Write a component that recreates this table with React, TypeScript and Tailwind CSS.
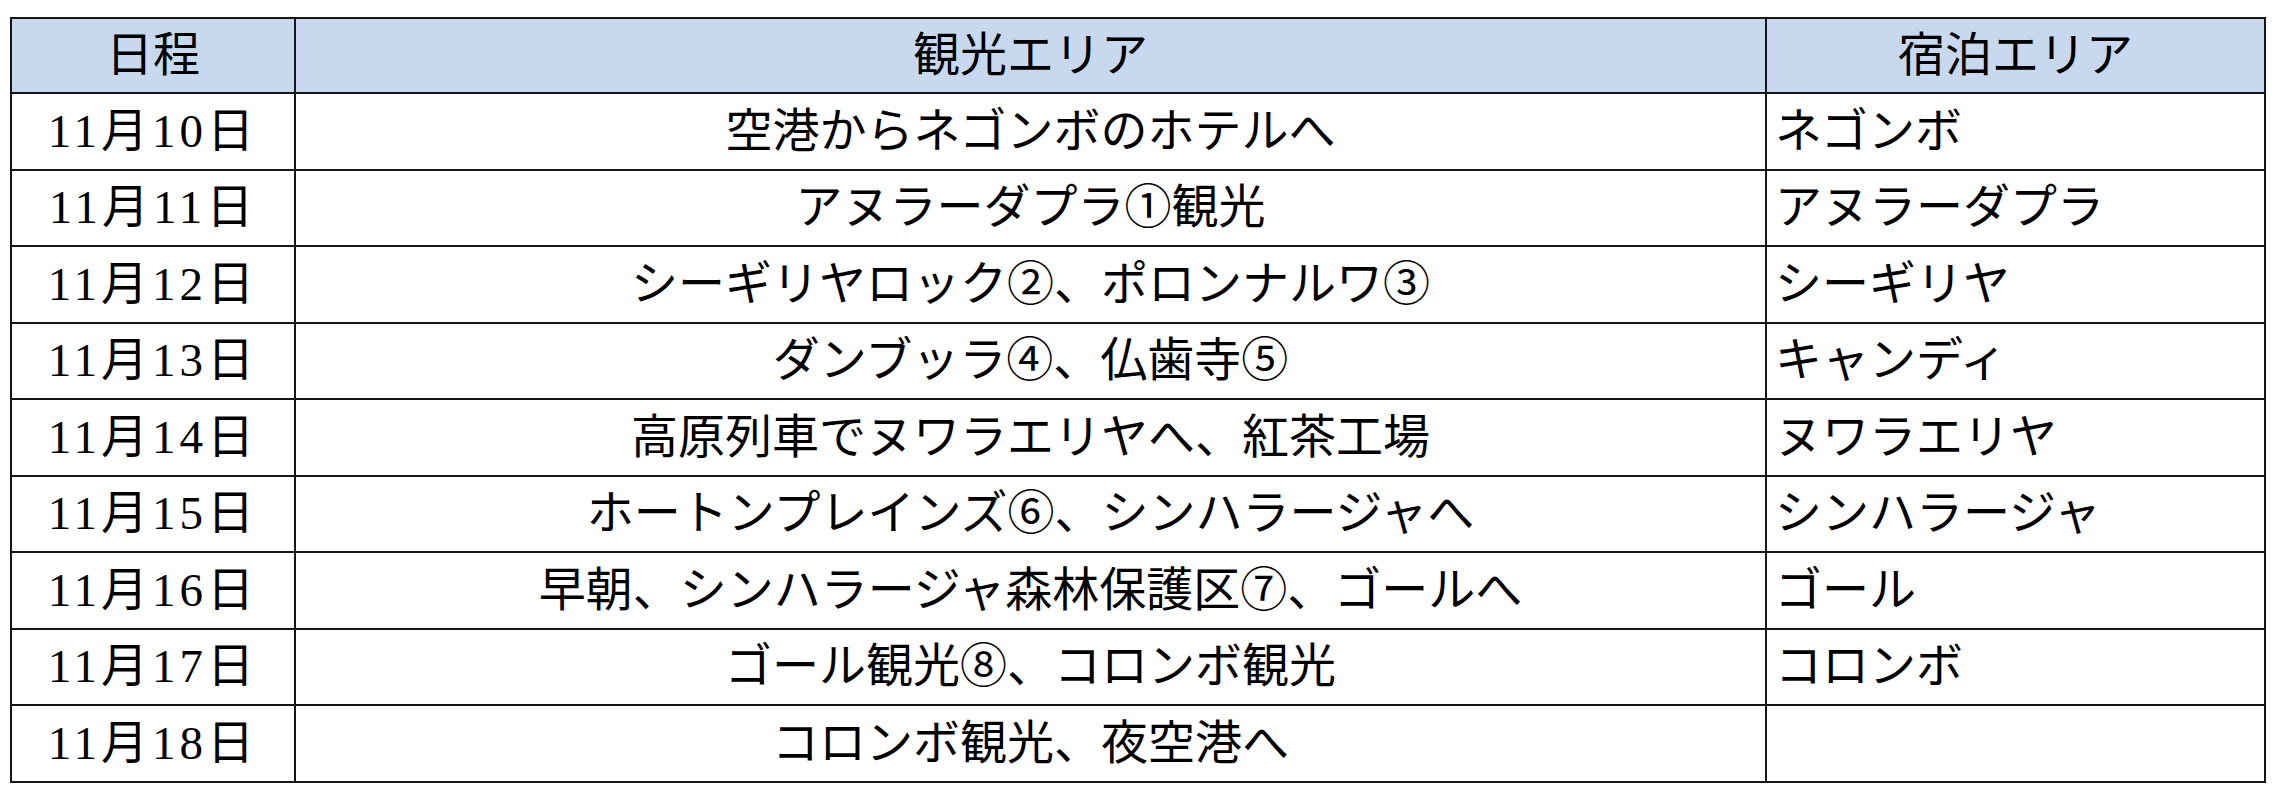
const rows: [string, string, string][] = [
  ["11月10日", "空港からネゴンボのホテルへ", "ネゴンボ"],
  ["11月11日", "アヌラーダプラ①観光", "アヌラーダプラ"],
  ["11月12日", "シーギリヤロック②、ポロンナルワ③", "シーギリヤ"],
  ["11月13日", "ダンブッラ④、仏歯寺⑤", "キャンディ"],
  ["11月14日", "高原列車でヌワラエリヤへ、紅茶工場", "ヌワラエリヤ"],
  ["11月15日", "ホートンプレインズ⑥、シンハラージャへ", "シンハラージャ"],
  ["11月16日", "早朝、シンハラージャ森林保護区⑦、ゴールへ", "ゴール"],
  ["11月17日", "ゴール観光⑧、コロンボ観光", "コロンボ"],
  ["11月18日", "コロンボ観光、夜空港へ", ""],
];

const cell = "border-2 border-[#161616] p-0 align-middle";

export default function App() {
  return (
    <div
      className="min-h-[798px] w-[2282px] bg-white pl-[10px] pt-[17px] text-[47px] leading-none text-black"
      style={{ fontFamily: '"Liberation Serif", "Noto Sans CJK JP", serif' }}
    >
      <table className="w-[2254px] table-fixed border-collapse">
        <colgroup>
          <col className="w-[284px]" />
          <col className="w-[1471px]" />
          <col className="w-[499px]" />
        </colgroup>
        <thead>
          <tr className="h-[75px] bg-[#c8d8ee]">
            <th className={`${cell} text-center font-normal`}>日程</th>
            <th className={`${cell} text-center font-normal`}>観光エリア</th>
            <th className={`${cell} text-center font-normal`}>宿泊エリア</th>
          </tr>
        </thead>
        <tbody>
          {rows.map(([date, spot, stay]) => (
            <tr key={date} className="h-[76.5px]">
              <td className={`${cell} text-center tracking-[4px]`}>{date}</td>
              <td className={`${cell} text-center`}>{spot}</td>
              <td className={`${cell} pl-[8px] text-left`}>{stay}</td>
            </tr>
          ))}
        </tbody>
      </table>
    </div>
  );
}
